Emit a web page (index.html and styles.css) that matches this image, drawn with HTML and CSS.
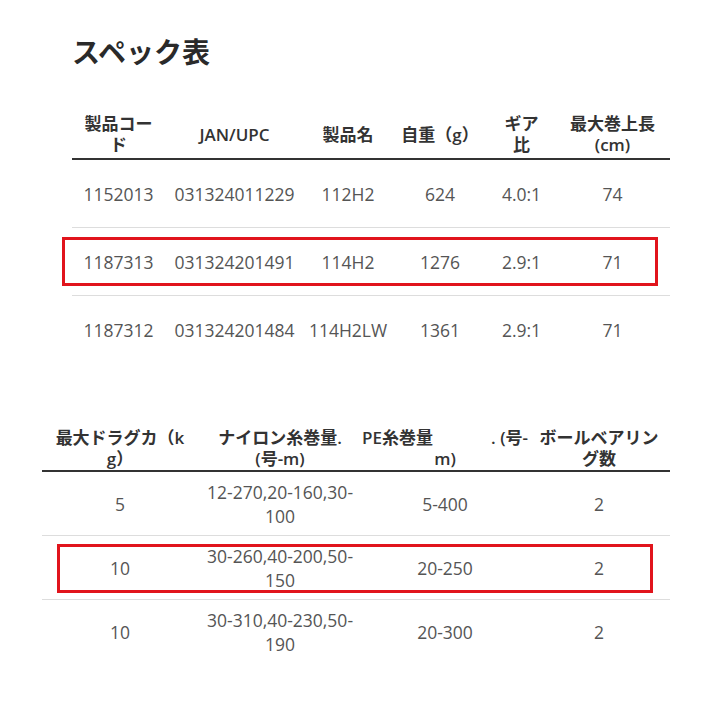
FILE: index.html
```html
<!DOCTYPE html>
<html lang="ja">
<head>
<meta charset="utf-8">
<link rel="stylesheet" href="styles.css">
</head>
<body>
<h1 class="title">スペック表</h1>

<div class="wrap wrap-1">
  <table class="spec spec-1">
    <colgroup>
      <col class="c1-1"><col class="c1-2"><col class="c1-3"><col class="c1-4"><col class="c1-5"><col class="c1-6">
    </colgroup>
    <thead>
      <tr>
        <th>製品コー<br>ド</th>
        <th>JAN/UPC</th>
        <th>製品名</th>
        <th>自重（g）</th>
        <th>ギア<br>比</th>
        <th>最大巻上長<br>(cm)</th>
      </tr>
    </thead>
    <tbody>
      <tr><td>1152013</td><td>031324011229</td><td>112H2</td><td>624</td><td>4.0:1</td><td>74</td></tr>
      <tr><td>1187313</td><td>031324201491</td><td>114H2</td><td>1276</td><td>2.9:1</td><td>71</td></tr>
      <tr><td>1187312</td><td>031324201484</td><td>114H2LW</td><td>1361</td><td>2.9:1</td><td>71</td></tr>
    </tbody>
  </table>
  <div class="highlight hl-1"></div>
</div>

<div class="wrap wrap-2">
  <table class="spec spec-2">
    <colgroup>
      <col class="c2-1"><col class="c2-2"><col class="c2-3"><col class="c2-4">
    </colgroup>
    <thead>
      <tr>
        <th>最大ドラグカ（k<br>g）</th>
        <th>ナイロン糸巻量.<br>(号-m)</th>
        <th class="pe"><span class="pe-line"><span>PE糸巻量</span><span>. (号-</span></span><span class="pe-last">m)</span></th>
        <th>ボールベアリン<br>グ数</th>
      </tr>
    </thead>
    <tbody>
      <tr><td>5</td><td class="two"><span class="ln">12-270,20-160,30-</span><span class="ln">100</span></td><td>5-400</td><td>2</td></tr>
      <tr><td>10</td><td class="two"><span class="ln">30-260,40-200,50-</span><span class="ln">150</span></td><td>20-250</td><td>2</td></tr>
      <tr><td>10</td><td class="two"><span class="ln">30-310,40-230,50-</span><span class="ln">190</span></td><td>20-300</td><td>2</td></tr>
    </tbody>
  </table>
  <div class="highlight hl-2"></div>
</div>
</body>
</html>
```

FILE: styles.css
```css
html, body {
  margin: 0;
  padding: 0;
  background: #ffffff;
}

body {
  font-family: "Open Sans", "Noto Sans CJK JP", sans-serif;
  color: #333;
}

.title {
  margin: 32px 0 0 72px;
  font-family: "Noto Sans CJK JP", sans-serif;
  font-size: 28px;
  line-height: 39px;
  font-weight: 700;
  color: #2a2a2a;
}

.wrap {
  position: relative;
}

.wrap-1 {
  margin: 39px 0 0 72px;
  width: 598px;
}

.wrap-2 {
  margin: 62px 0 0 42px;
  width: 628px;
}

.spec {
  width: 100%;
  border-collapse: collapse;
  table-layout: fixed;
}

.spec th {
  font-family: "Open Sans", "Noto Sans CJK JP", sans-serif;
  font-weight: 600;
  font-size: 17px;
  line-height: 21px;
  color: #333;
  text-align: center;
  vertical-align: middle;
  padding: 0;
  border-bottom: 2px solid #333;
  white-space: nowrap;
}

.spec td {
  font-size: 17.5px;
  color: #555;
  text-align: center;
  vertical-align: middle;
  padding: 0;
  border-bottom: 1px solid #dddddd;
  white-space: nowrap;
}

.spec tbody tr:last-child td {
  border-bottom: none;
}

.spec-1 th { height: 48px; }
.spec-1 td { height: 67px; }

.spec-2 th { height: 45px; }
.spec-2 td { height: 63px; line-height: 24px; }

.ln {
  display: block;
  line-height: 24px;
}

.c1-1 { width: 93px; }
.c1-2 { width: 139px; }
.c1-3 { width: 88px; }
.c1-4 { width: 96px; }
.c1-5 { width: 67px; }
.c1-6 { width: 115px; }

.c2-1 { width: 156px; }
.c2-2 { width: 164px; }
.c2-3 { width: 166px; }
.c2-4 { width: 142px; }

.pe-line {
  display: flex;
  justify-content: space-between;
}

.pe-last {
  display: block;
  text-align: center;
}

.highlight {
  position: absolute;
  border: 3px solid #e1141c;
  box-sizing: border-box;
  pointer-events: none;
}

.hl-1 {
  left: -10px;
  top: 127px;
  width: 596px;
  height: 49px;
}

.hl-2 {
  left: 15px;
  top: 119px;
  width: 596px;
  height: 49px;
}
```
